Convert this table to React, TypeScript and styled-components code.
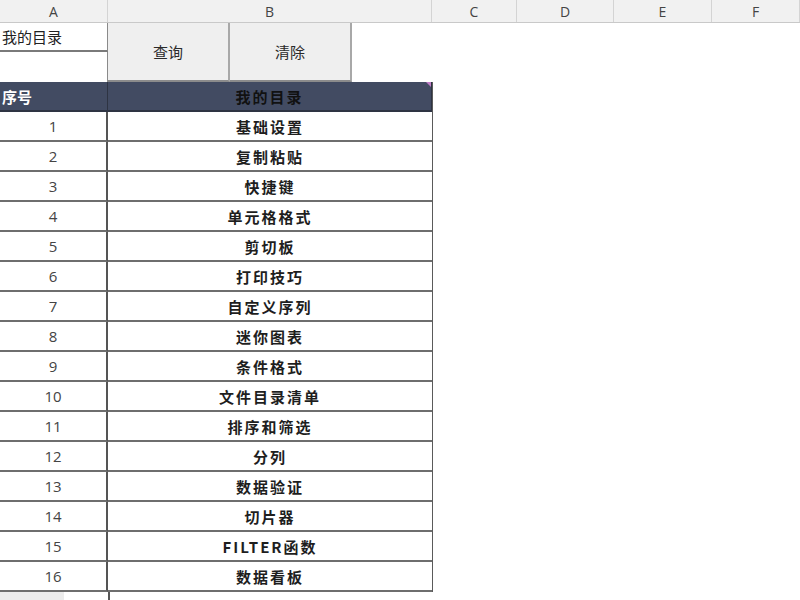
import React from "react";
import styled, { createGlobalStyle } from "styled-components";

const Global = createGlobalStyle`
  html, body { margin: 0; padding: 0; background: #ffffff; }
  body { width: 800px; height: 600px; overflow: hidden; font-family: "Noto Sans CJK SC", "Noto Sans", sans-serif; }
`;

const Sheet = styled.div`
  width: 800px;
  height: 600px;
  display: flex;
  flex-direction: column;
  background: #fff;
  overflow: hidden;
`;

const ColHeaderBar = styled.div`
  display: flex;
  height: 22px;
  background: #f1f1f1;
  border-bottom: 1px solid #c9c9c9;
  flex-shrink: 0;
`;

const ColHeader = styled.div<{ $w: number }>`
  width: ${(p) => p.$w}px;
  flex-shrink: 0;
  box-sizing: border-box;
  border-right: 1px solid #d4d4d4;
  display: flex;
  align-items: center;
  justify-content: center;
  font-family: "Open Sans", "Liberation Sans", sans-serif;
  font-size: 14px;
  color: #444;
`;

const Body = styled.div`
  display: flex;
  flex: 1;
`;

const Left = styled.div`
  width: 433px;
  flex-shrink: 0;
  display: flex;
  flex-direction: column;
`;

const TopArea = styled.div`
  display: grid;
  grid-template-columns: 108px 122px 122px 81px;
  grid-template-rows: 29px 30px;
`;

const TitleCell = styled.div`
  grid-column: 1;
  grid-row: 1;
  border-bottom: 2px solid #7a7a7a;
  border-right: 1px solid #8a8a8a;
  display: flex;
  align-items: center;
  padding-left: 2px;
  font-size: 15px;
  color: #222;
`;

const EmptyA = styled.div`
  grid-column: 1;
  grid-row: 2;
  border-right: 1px solid #8a8a8a;
`;

const SheetButton = styled.div<{ $col: number }>`
  grid-column: ${(p) => p.$col};
  grid-row: 1 / span 2;
  background: #efefef;
  box-sizing: border-box;
  border-right: 2px solid #a8a8a8;
  border-bottom: 2px solid #8c8c8c;
  display: flex;
  align-items: center;
  justify-content: center;
  font-size: 15px;
  color: #2a2a2a;
`;

const Table = styled.div`
  display: grid;
  grid-template-columns: 108px 324px;
  grid-auto-rows: 30px;
  border-right: 1px solid #5a5a5a;
`;

const HeadCell = styled.div<{ $align: "left" | "center"; $color: string }>`
  position: relative;
  background: #424b62;
  border-bottom: 2px solid #2e3443;
  border-right: 1px solid #2e3443;
  display: flex;
  align-items: center;
  justify-content: ${(p) => (p.$align === "left" ? "flex-start" : "center")};
  padding-left: ${(p) => (p.$align === "left" ? "2px" : "0")};
  font-size: 15px;
  font-weight: 700;
  color: ${(p) => p.$color};
  letter-spacing: ${(p) => (p.$align === "left" ? "0" : "2px")};
`;

const CommentMark = styled.span`
  position: absolute;
  top: 0;
  right: 0;
  width: 0;
  height: 0;
  border-top: 5px solid #c07ec8;
  border-left: 5px solid transparent;
`;

const NumCell = styled.div`
  box-sizing: border-box;
  border-bottom: 2px solid #6e6e6e;
  border-right: 2px solid #555;
  display: flex;
  align-items: center;
  justify-content: center;
  font-family: "Open Sans", "Liberation Sans", sans-serif;
  font-size: 15px;
  color: #444;
`;

const NameCell = styled.div`
  box-sizing: border-box;
  border-bottom: 2px solid #6e6e6e;
  display: flex;
  align-items: center;
  justify-content: center;
  font-size: 15px;
  font-weight: 700;
  letter-spacing: 2px;
  color: #1e1e1e;
`;

const Tail = styled.div`
  display: flex;
  height: 8px;
`;

const TailA = styled.div`
  width: 64px;
  background: #ececec;
`;

const TailGap = styled.div`
  width: 44px;
  border-right: 2px solid #555;
`;

const Right = styled.div`
  flex: 1;
  background: #fff;
`;

const columns: [string, number][] = [
  ["A", 108],
  ["B", 324],
  ["C", 85],
  ["D", 97],
  ["E", 98],
  ["F", 88],
];

const items = [
  "基础设置",
  "复制粘贴",
  "快捷键",
  "单元格格式",
  "剪切板",
  "打印技巧",
  "自定义序列",
  "迷你图表",
  "条件格式",
  "文件目录清单",
  "排序和筛选",
  "分列",
  "数据验证",
  "切片器",
  "FILTER函数",
  "数据看板",
];

export default function App() {
  return (
    <>
      <Global />
      <Sheet>
        <ColHeaderBar>
          {columns.map(([l, w]) => (
            <ColHeader key={l} $w={w}>
              {l}
            </ColHeader>
          ))}
        </ColHeaderBar>
        <Body>
          <Left>
            <TopArea>
              <TitleCell>我的目录</TitleCell>
              <EmptyA />
              <SheetButton $col={2}>查询</SheetButton>
              <SheetButton $col={3}>清除</SheetButton>
            </TopArea>
            <Table>
              <HeadCell $align="left" $color="#ffffff">
                序号
              </HeadCell>
              <HeadCell $align="center" $color="#111111">
                我的目录
                <CommentMark />
              </HeadCell>
              {items.map((name, i) => (
                <React.Fragment key={name}>
                  <NumCell>{i + 1}</NumCell>
                  <NameCell>{name}</NameCell>
                </React.Fragment>
              ))}
            </Table>
            <Tail>
              <TailA />
              <TailGap />
            </Tail>
          </Left>
          <Right />
        </Body>
      </Sheet>
    </>
  );
}
